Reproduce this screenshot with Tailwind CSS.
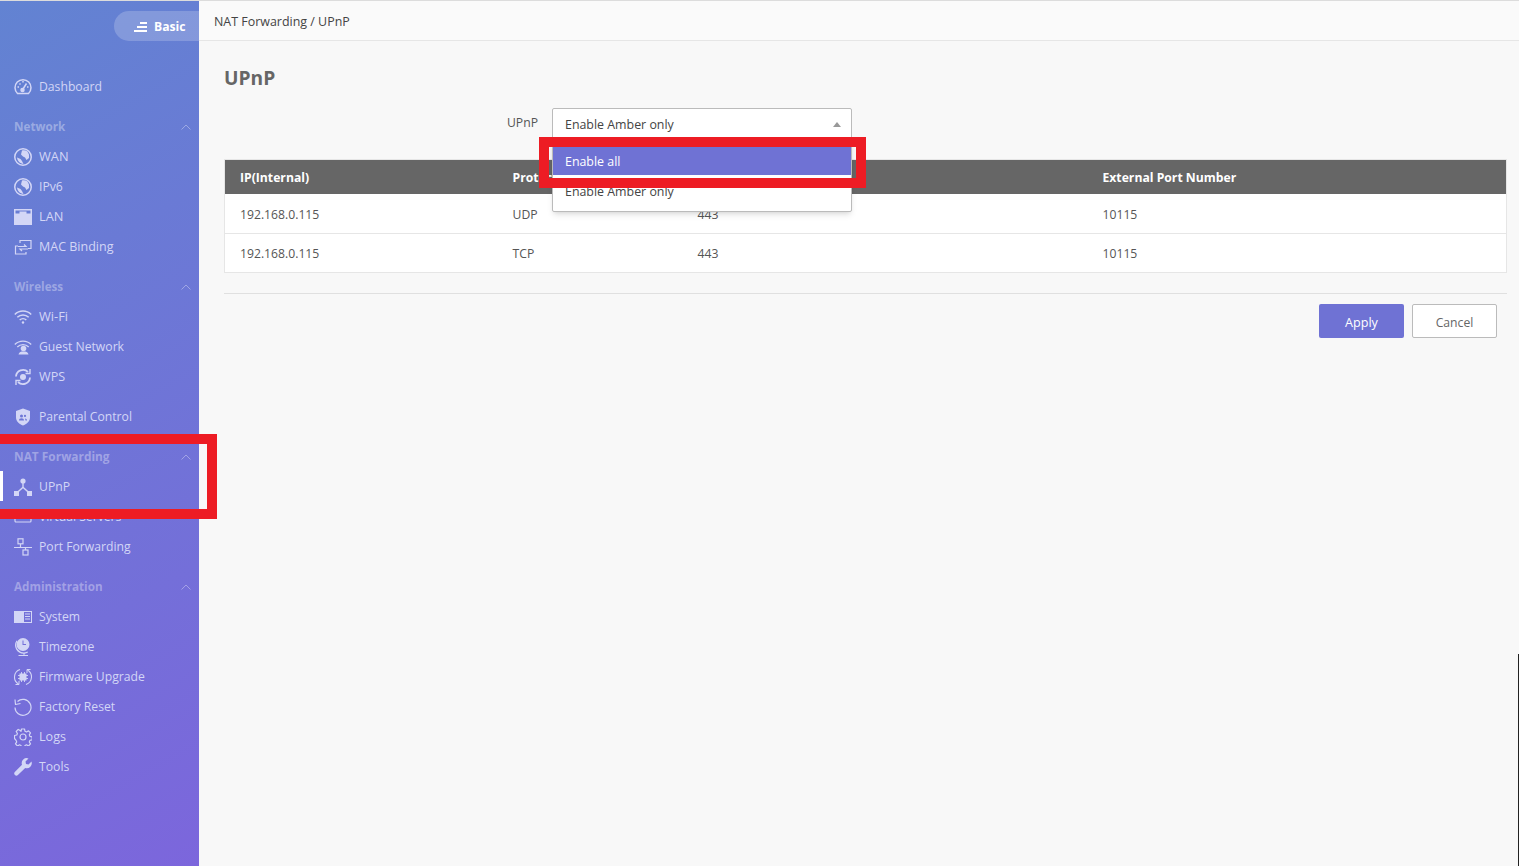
<!DOCTYPE html>
<html lang="en">
<head>
  <meta charset="UTF-8" />
  <meta name="viewport" content="width=device-width, initial-scale=1.0" />
  <title>UPnP | NAT Forwarding</title>
  <script src="https://cdn.jsdelivr.net/npm/@tailwindcss/browser@4"></script>
</head>
<body class="font-['Open_Sans',sans-serif] text-[12.2px] text-[#555] bg-[#f8f8f8]">
  <div class="relative flex h-[866px] w-[1519px] overflow-hidden border-t border-[#dcdcdc]">

    <!-- Sidebar -->
    <aside class="w-[199px] shrink-0 bg-linear-[150deg] from-[#6283d2] to-[#7c66dc] text-[#d3d6f6]">
      <div class="flex justify-end pt-[10px]">
        <div class="flex h-[30px] w-[85px] items-center gap-[7px] rounded-l-full bg-white/20 pl-[20px] pt-[1px] font-bold text-white">
          <svg class="h-[12px] w-[13px]" viewBox="0 0 13 12" fill="currentColor"><rect x="6" y="1" width="7" height="2"/><rect x="3" y="5" width="10" height="2"/><rect x="0" y="9" width="13" height="2"/></svg>
          <span class="mt-[2px]">Basic</span>
        </div>
      </div>

      <nav class="pt-[30px]">
        <div class="mb-[10px]">
          <a class="flex h-[30px] items-center gap-[7px] pl-[14px] pt-[1px]">
            <svg class="h-[18px] w-[18px]" viewBox="0 0 18 18" fill="none" stroke="currentColor" stroke-width="1.5"><path d="M3.5 15.5A8 8 0 1 1 14.5 15.5Z"/><path d="M9 11 12.5 5.5M3.5 9H5M13 9h1.500M5.500 5.500l1 1M9 3v1.500"/><circle cx="8.500" cy="12" r="1.500" fill="currentColor"/></svg>
            <span class="mt-[2px]">Dashboard</span>
          </a>
        </div>

        <div class="mb-[10px]">
          <div class="flex h-[30px] items-center justify-between pl-[14px] pr-[8px] pt-[1px] text-[11.7px] font-bold text-white/35">
            <span>Network</span>
            <svg class="h-[6px] w-[10px]" viewBox="0 0 10 6" fill="none" stroke="currentColor"><path d="M.5 5.500 5 1l4.500 4.500"/></svg>
          </div>
          <a class="flex h-[30px] items-center gap-[7px] pl-[14px] pt-[1px]">
            <svg class="h-[18px] w-[18px]" viewBox="0 0 18 18" fill="currentColor"><path fill-rule="evenodd" d="M9 0a9 9 0 1 1 0 18A9 9 0 0 1 9 0Zm0 1.500a7.500 7.500 0 1 0 0 15 7.500 7.500 0 0 0 0-15Z"/><path d="M8 2.500c2-.5 4-.2 5.500 1L15 6.500 15 10l-2.500 2L11 9.500 9 8.500 7 6.500ZM3 9.500l3.500 1.500 1.500 2 1.500 3C6 15.500 3.500 13 3 9.500Z"/></svg>
            <span class="text-[12.8px]">WAN</span>
          </a>
          <a class="flex h-[30px] items-center gap-[7px] pl-[14px] pt-[1px]">
            <svg class="h-[18px] w-[18px]" viewBox="0 0 18 18" fill="currentColor"><path fill-rule="evenodd" d="M9 0a9 9 0 1 1 0 18A9 9 0 0 1 9 0Zm0 1.500a7.500 7.500 0 1 0 0 15 7.500 7.500 0 0 0 0-15Z"/><path d="M8 2.500c2-.5 4-.2 5.500 1L15 6.500 15 10l-2.500 2L11 9.500 9 8.500 7 6.500ZM3 9.500l3.500 1.500 1.500 2 1.500 3C6 15.500 3.500 13 3 9.500Z"/></svg>
            <span class="mt-[2px]">IPv6</span>
          </a>
          <a class="flex h-[30px] items-center gap-[7px] pl-[14px] pt-[1px]">
            <svg class="h-[16px] w-[18px]" viewBox="0 0 18 16" fill="currentColor"><path fill-rule="evenodd" d="M0 0h18v16H0ZM1.500 1.500v3h4v-2h7v2h4v-3Z"/></svg>
            <span class="text-[12.8px]">LAN</span>
          </a>
          <a class="flex h-[30px] items-center gap-[7px] pl-[14px] pt-[1px]">
            <svg class="h-[18px] w-[18px]" viewBox="0 0 18 18" fill="none" stroke="currentColor" stroke-width="1.200"><path d="M6 5V2.500h11v8h-3M12 14v2H1.500V8H4"/><path d="M4 8.500h8L10 6.500M14 11H6l2 2"/></svg>
            <span class="mt-[2px] text-[12.5px]">MAC Binding</span>
          </a>
        </div>

        <div class="mb-[10px]">
          <div class="flex h-[30px] items-center justify-between pl-[14px] pr-[8px] pt-[1px] text-[11.7px] font-bold text-white/35">
            <span>Wireless</span>
            <svg class="h-[6px] w-[10px]" viewBox="0 0 10 6" fill="none" stroke="currentColor"><path d="M.5 5.500 5 1l4.500 4.500"/></svg>
          </div>
          <a class="flex h-[30px] items-center gap-[7px] pl-[14px] pt-[1px]">
            <svg class="h-[18px] w-[18px]" viewBox="0 0 18 18" fill="none" stroke="currentColor" stroke-width="1.500"><path d="M.8 6.500a11.500 11.500 0 0 1 16.400 0M3.300 9.300a8 8 0 0 1 11.400 0M5.700 12a4.700 4.700 0 0 1 6.600 0"/><circle cx="9" cy="14.500" r="1.200" fill="currentColor" stroke="none"/></svg>
            <span class="text-[12.8px]">Wi-Fi</span>
          </a>
          <a class="flex h-[30px] items-center gap-[7px] pl-[14px] pt-[1px]">
            <svg class="h-[18px] w-[18px]" viewBox="0 0 18 18" fill="none" stroke="currentColor" stroke-width="1.300"><path d="M.8 6.500a11.500 11.500 0 0 1 16.400 0M3.300 9a8 8 0 0 1 11.400 0"/><circle cx="9.500" cy="10.500" r="2.800" fill="currentColor" stroke="none"/><path d="M4.500 16.500c.5-2.500 2.500-3 5-3s4.500.5 5 3Z" fill="currentColor" stroke="none"/></svg>
            <span class="mt-[2px]">Guest Network</span>
          </a>
          <a class="flex h-[30px] items-center gap-[7px] pl-[14px] pt-[1px]">
            <svg class="h-[18px] w-[18px]" viewBox="0 0 18 18" fill="none" stroke="currentColor" stroke-width="1.800"><path d="M2 8.500A7 7 0 0 1 14 4M16 9.500A7 7 0 0 1 4 14"/><path d="M16 1v4.500h-4.500M2 17v-4.500h4.500" stroke-width="1.400"/><circle cx="9" cy="9" r="3" fill="currentColor" stroke="none"/></svg>
            <span class="mt-[2px] text-[12.6px]">WPS</span>
          </a>
        </div>

        <div class="mb-[10px]">
          <a class="flex h-[30px] items-center gap-[7px] pl-[14px] pt-[1px]">
            <svg class="h-[18px] w-[18px]" viewBox="0 0 18 18" fill="currentColor"><path fill-rule="evenodd" d="M9 .5 16 3v6.500c0 4-3.500 6.800-7 8-3.500-1.200-7-4-7-8V3ZM7.500 6.500a1.500 1.500 0 1 0 0 3 1.500 1.500 0 0 0 0-3ZM5 12.500h5c0-1.500-1-2.300-2.500-2.300S5 11 5 12.500Zm6-3.500a1.100 1.100 0 1 0 0-2.200A1.100 1.100 0 0 0 11 9Zm.500 3.500H13c0-1.300-.8-2-2-2Z"/></svg>
            <span class="mt-[2px]">Parental Control</span>
          </a>
        </div>

        <div class="mb-[10px]">
          <div class="flex h-[30px] items-center justify-between pl-[14px] pr-[8px] pt-[1px] text-[11.9px] font-bold text-white/35">
            <span>NAT Forwarding</span>
            <svg class="h-[6px] w-[10px]" viewBox="0 0 10 6" fill="none" stroke="currentColor"><path d="M.5 5.500 5 1l4.500 4.500"/></svg>
          </div>
          <a class="flex h-[30px] items-center gap-[7px] border-l-[3px] border-white pl-[11px] pt-[1px]">
            <svg class="h-[18px] w-[18px]" viewBox="0 0 18 18" fill="currentColor"><circle cx="9" cy="3" r="2.600"/><rect x="0" y="13" width="5" height="5"/><rect x="13" y="13" width="5" height="5"/><path d="M8.300 4h1.400v5l5 4.500-1 1L9 10.200 4.300 14.500l-1-1 5-4.500Z"/></svg>
            <span class="mt-[2px]">UPnP</span>
          </a>
          <a class="flex h-[30px] items-center gap-[7px] pl-[14px] pt-[1px]">
            <svg class="h-[18px] w-[18px]" viewBox="0 0 18 18" fill="none" stroke="currentColor" stroke-width="1.200"><rect x="1" y="4" width="16" height="10" rx="1"/></svg>
            <span class="mt-[2px]">Virtual Servers</span>
          </a>
          <a class="flex h-[30px] items-center gap-[7px] pl-[14px] pt-[1px]">
            <svg class="h-[18px] w-[18px]" viewBox="0 0 18 18" fill="none" stroke="currentColor" stroke-width="1.200"><rect x="4" y=".8" width="5" height="5"/><rect x="9" y="12" width="5" height="5"/><path d="M6.500 6v3.500M11.500 12V9.500M0 9.500h18"/></svg>
            <span class="mt-[2px]">Port Forwarding</span>
          </a>
        </div>

        <div>
          <div class="flex h-[30px] items-center justify-between pl-[14px] pr-[8px] pt-[1px] text-[11.7px] font-bold text-white/35">
            <span>Administration</span>
            <svg class="h-[6px] w-[10px]" viewBox="0 0 10 6" fill="none" stroke="currentColor"><path d="M.5 5.500 5 1l4.500 4.500"/></svg>
          </div>
          <a class="flex h-[30px] items-center gap-[7px] pl-[14px] pt-[1px]">
            <svg class="h-[12px] w-[18px]" viewBox="0 0 18 12" fill="currentColor"><path fill-rule="evenodd" d="M0 0h18v12H0ZM10 1v10h7V1Zm1 1.500h5v1h-5Zm0 2.500h5v1h-5Zm0 2.500h5v1h-5Z"/></svg>
            <span class="mt-[2px]">System</span>
          </a>
          <a class="flex h-[30px] items-center gap-[7px] pl-[14px] pt-[1px]">
            <svg class="h-[18px] w-[18px]" viewBox="0 0 18 18" fill="currentColor"><path fill-rule="evenodd" d="M9 0a6.500 6.500 0 1 1 0 13A6.500 6.500 0 0 1 9 0ZM8.500 2.500V7H12V6H9.500V2.500Z"/><path d="M2.500 2.500 3.500 3a7.500 7.500 0 0 0 10 10.500l.5 1a8.500 8.500 0 0 1-3.500 1.200V17H14v1H4.500v-1h5v-1.300A8.500 8.500 0 0 1 2.500 2.500Z"/></svg>
            <span class="mt-[2px]">Timezone</span>
          </a>
          <a class="flex h-[30px] items-center gap-[7px] pl-[14px] pt-[1px]">
            <svg class="h-[18px] w-[18px]" viewBox="0 0 18 18" fill="none" stroke="currentColor" stroke-width="1.100"><path d="M6 1.500A8 8 0 0 0 4.500 16M12 16.500A8 8 0 0 0 13.500 2"/><path d="M5 13v3.500H1.500M13 5V1.500h3.500" stroke-width="1"/><rect x="5.500" y="5.500" width="7" height="7" fill="currentColor" stroke="none"/><path d="M7.500 4v10M10.500 4v10M4 7.500h10M4 10.500h10" stroke-width=".9"/></svg>
            <span class="mt-[2px]">Firmware Upgrade</span>
          </a>
          <a class="flex h-[30px] items-center gap-[7px] pl-[14px] pt-[1px]">
            <svg class="h-[18px] w-[18px]" viewBox="0 0 18 18" fill="none" stroke="currentColor" stroke-width="1.200"><path d="M3.500 3.500A8 8 0 1 1 1 9.500"/><path d="M1 1.500 1.500 6.500 6.500 5.500" stroke-linejoin="round"/></svg>
            <span class="mt-[2px]">Factory Reset</span>
          </a>
          <a class="flex h-[30px] items-center gap-[7px] pl-[14px] pt-[1px]">
            <svg class="h-[18px] w-[18px]" viewBox="0 0 18 18" fill="none" stroke="currentColor" stroke-width="1.200"><path stroke-linejoin="round" d="M7.500 1h3l.5 2.300 1.500.7 2-1.200 2 2.100-1.200 2 .6 1.500 2.300.5v3l-2.300.5-.6 1.500 1.200 2-2 2.100-2-1.200-1.500.7-.5 2.300h-3l-.5-2.300-1.500-.7-2 1.200-2-2.100 1.200-2-.6-1.500L.5 10.500v-3L2.800 7l.6-1.500-1.200-2 2-2.100 2 1.200L7 3.300Z"/><circle cx="9" cy="9" r="3"/></svg>
            <span class="mt-[2px] text-[12.6px]">Logs</span>
          </a>
          <a class="flex h-[30px] items-center gap-[7px] pl-[14px] pt-[1px]">
            <svg class="h-[18px] w-[18px]" viewBox="0 0 18 18" fill="currentColor"><path d="M17.500 3.500 14.500 6.500 12 6l-.5-2.500L14.500.5A5 5 0 0 0 8 6.800L.8 14a2.200 2.200 0 0 0 3.100 3.100l7.300-7.200a5 5 0 0 0 6.300-6.400Z"/></svg>
            <span class="mt-[2px]">Tools</span>
          </a>
        </div>
      </nav>
    </aside>

    <!-- Main -->
    <main class="flex-1">
      <div class="flex h-[40px] items-center border-b border-[#e6e6e6] bg-[#fafafa] pl-[15px] pt-[3px] text-[12.45px] text-[#444]">NAT Forwarding / UPnP</div>

      <div class="pl-[25px] pr-[12px] pt-[23px]">
        <h1 class="h-[28px] text-[19.2px] leading-[28px] font-bold text-[#666]">UPnP</h1>

        <div class="mt-[16px] flex">
          <label class="w-[314px] pt-[6px] text-right text-[#555]">UPnP</label>
          <div class="relative ml-[14px] w-[300px] text-[12.4px]">
            <div class="flex h-[32px] items-center justify-between rounded-[2px] border border-[#bbb] bg-white pl-[12px] pr-[10px] pt-[1px] text-[#444]">
              <span class="mt-[2px]">Enable Amber only</span>
              <span class="h-0 w-0 border-x-[4px] border-b-[5px] border-x-transparent border-b-[#999]"></span>
            </div>
            <ul class="absolute left-0 top-[31px] z-10 w-full rounded-[2px] border border-[#bbb] bg-white pb-[6px] pt-[5px] shadow-md">
              <li class="flex h-[30px] items-center bg-[#6f72d4] pl-[12px] pt-[4px] text-white">Enable all</li>
              <li class="flex h-[30px] items-center pl-[12px] pt-[5px] text-[#444]">Enable Amber only</li>
            </ul>
          </div>
        </div>

        <table class="mt-[19px] w-full table-fixed border border-[#e6e6e6] bg-white text-left">
          <thead>
            <tr class="h-[34px] bg-[#666] text-white">
              <th class="w-[273px] pl-[15px] pt-[2px] font-bold">IP(Internal)</th>
              <th class="w-[185px] pl-[15px] pt-[2px] font-bold">Protocol</th>
              <th class="w-[405px] pl-[15px] pt-[2px] font-bold">Internal Port Number</th>
              <th class="pl-[15px] pt-[2px] font-bold">External Port Number</th>
            </tr>
          </thead>
          <tbody>
            <tr class="h-[40px] border-b border-[#e6e6e6]">
              <td class="pl-[15px] pt-[4px]">192.168.0.115</td>
              <td class="pl-[15px] pt-[4px]">UDP</td>
              <td class="pl-[15px] pt-[4px]">443</td>
              <td class="pl-[15px] pt-[4px]">10115</td>
            </tr>
            <tr class="h-[39px]">
              <td class="pl-[15px] pt-[2px]">192.168.0.115</td>
              <td class="pl-[15px] pt-[2px]">TCP</td>
              <td class="pl-[15px] pt-[2px]">443</td>
              <td class="pl-[15px] pt-[2px]">10115</td>
            </tr>
          </tbody>
        </table>

        <div class="mt-[20px] flex justify-end gap-[8px] border-t border-[#e0e0e0] pr-[10px] pt-[10px]">
          <button class="h-[34px] w-[85px] rounded-[2px] bg-[#6f72d4] pt-[4px] text-[12.6px] text-white">Apply</button>
          <button class="h-[34px] w-[85px] rounded-[2px] border border-[#bbb] bg-white pt-[4px] text-[#666]">Cancel</button>
        </div>
      </div>
    </main>

    <!-- Red callouts drawn over the screenshot -->
    <div class="absolute left-[-10px] top-[433px] z-20 h-[85px] w-[227px] border-[10px] border-[#ed1c24]"></div>
    <div class="absolute left-[539px] top-[136px] z-20 h-[51px] w-[327px] border-[10px] border-[#ed1c24]"></div>
    <div class="absolute right-0 top-[653px] bottom-0 w-px bg-[#222]"></div>
  </div>
</body>
</html>
